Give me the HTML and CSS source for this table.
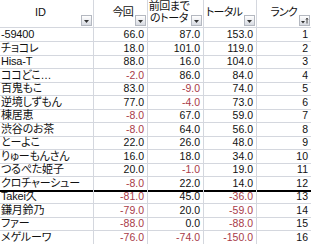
FILE: index.html
```html
<!DOCTYPE html>
<html lang="ja">
<head>
<meta charset="utf-8">
<link rel="stylesheet" href="styles.css">
</head>
<body>
<div class="sheet">
  <div class="row head">
    <div class="cell h-id"><span class="ht">ID</span><span class="dd"><svg width="11" height="11" viewBox="0 0 11 11"><path d="M3 5h5l-2.5 3z" fill="#333"/></svg></span></div>
    <div class="cell h-num"><span class="ht">今回</span><span class="dd"><svg width="11" height="11" viewBox="0 0 11 11"><path d="M3 5h5l-2.5 3z" fill="#333"/></svg></span></div>
    <div class="cell h-num"><span class="ht two">前回まで<br>のトータ</span><span class="dd"><svg width="11" height="11" viewBox="0 0 11 11"><path d="M3 5h5l-2.5 3z" fill="#333"/></svg></span></div>
    <div class="cell h-num"><span class="ht">トータル</span><span class="dd"><svg width="11" height="11" viewBox="0 0 11 11"><path d="M3 5h5l-2.5 3z" fill="#333"/></svg></span></div>
    <div class="cell h-num"><span class="ht">ランク</span><span class="dd"><svg width="11" height="11" viewBox="0 0 11 11"><path d="M2 6h4l-2 2.5z" fill="#333"/><path d="M8 3.2v5.3M7 4.6l1-1.4 1 1.4" stroke="#333" stroke-width="0.9" fill="none"/></svg></span></div>
  </div>
  <div class="row"><div class="cell id">-59400</div><div class="cell n">66.0</div><div class="cell n">87.0</div><div class="cell n">153.0</div><div class="cell n">1</div></div>
  <div class="row"><div class="cell id">チョコレ</div><div class="cell n">18.0</div><div class="cell n">101.0</div><div class="cell n">119.0</div><div class="cell n">2</div></div>
  <div class="row"><div class="cell id">Hisa-T</div><div class="cell n">88.0</div><div class="cell n">16.0</div><div class="cell n">104.0</div><div class="cell n">3</div></div>
  <div class="row"><div class="cell id">ココどこ…</div><div class="cell n neg">-2.0</div><div class="cell n">86.0</div><div class="cell n">84.0</div><div class="cell n">4</div></div>
  <div class="row"><div class="cell id">百鬼もこ</div><div class="cell n">83.0</div><div class="cell n neg">-9.0</div><div class="cell n">74.0</div><div class="cell n">5</div></div>
  <div class="row"><div class="cell id">逆境しずもん</div><div class="cell n">77.0</div><div class="cell n neg">-4.0</div><div class="cell n">73.0</div><div class="cell n">6</div></div>
  <div class="row"><div class="cell id">棟居恵</div><div class="cell n neg">-8.0</div><div class="cell n">67.0</div><div class="cell n">59.0</div><div class="cell n">7</div></div>
  <div class="row"><div class="cell id">渋谷のお茶</div><div class="cell n neg">-8.0</div><div class="cell n">64.0</div><div class="cell n">56.0</div><div class="cell n">8</div></div>
  <div class="row"><div class="cell id">とーよこ</div><div class="cell n">22.0</div><div class="cell n">26.0</div><div class="cell n">48.0</div><div class="cell n">9</div></div>
  <div class="row"><div class="cell id">りゅーもんさん</div><div class="cell n">16.0</div><div class="cell n">18.0</div><div class="cell n">34.0</div><div class="cell n">10</div></div>
  <div class="row"><div class="cell id">つるぺた姫子</div><div class="cell n">20.0</div><div class="cell n neg">-1.0</div><div class="cell n">19.0</div><div class="cell n">11</div></div>
  <div class="row cut"><div class="cell id">クロチャーシュー</div><div class="cell n neg">-8.0</div><div class="cell n">22.0</div><div class="cell n">14.0</div><div class="cell n">12</div></div>
  <div class="row"><div class="cell id">Takei久</div><div class="cell n neg">-81.0</div><div class="cell n">45.0</div><div class="cell n neg">-36.0</div><div class="cell n">13</div></div>
  <div class="row"><div class="cell id">鎌月鈴乃</div><div class="cell n neg">-79.0</div><div class="cell n">20.0</div><div class="cell n neg">-59.0</div><div class="cell n">14</div></div>
  <div class="row"><div class="cell id">ファー</div><div class="cell n neg">-88.0</div><div class="cell n">0.0</div><div class="cell n neg">-88.0</div><div class="cell n">15</div></div>
  <div class="row"><div class="cell id">メゲルーワ</div><div class="cell n neg">-76.0</div><div class="cell n neg">-74.0</div><div class="cell n neg">-150.0</div><div class="cell n">16</div></div>
</div>
</body>
</html>
```

FILE: styles.css
```css
html, body {
  margin: 0;
  padding: 0;
  background: #ffffff;
}
body {
  font-family: "Liberation Sans", "Noto Sans CJK JP", sans-serif;
  font-size: 11px;
  font-feature-settings: "palt" 1;
  color: #111;
  overflow: hidden;
}
.sheet {
  width: 311px;
}
.row {
  display: grid;
  grid-template-columns: 94px 54px 56px 53px 54px;
  height: 13.5px;
  box-sizing: border-box;
}
.row.head {
  height: 28px;
}
.cell {
  box-sizing: border-box;
  border-right: 1px solid #d4d7de;
  border-bottom: 1px solid #d4d7de;
  line-height: 13px;
  white-space: nowrap;
  overflow-x: clip;
  overflow-y: visible;
}
.cell:last-child {
  border-right: none;
}
.row.cut .cell {
  border-bottom: 2px solid #000;
}
.id {
  padding-left: 1px;
  letter-spacing: -0.2px;
}
.n {
  text-align: right;
  padding-right: 3px;
  font-size: 10.5px;
}
.neg {
  color: #a83a48;
}
.head .cell {
  display: flex;
  align-items: flex-end;
  justify-content: flex-end;
  padding: 0 1px 1px 0;
}
.head .ht {
  align-self: center;
  line-height: 12px;
  margin: 0 2px 2px 0;
  letter-spacing: -0.8px;
  flex-shrink: 0;
}
.head .h-id .ht {
  flex: 1;
  text-align: center;
  margin-right: 0;
  letter-spacing: 0;
}
.head .ht.two {
  flex: 1;
  align-self: flex-start;
  text-align: center;
  margin: 0 1px 0 0;
  letter-spacing: -0.4px;
}
.dd {
  width: 11px;
  height: 11px;
  box-sizing: border-box;
  border: 1px solid #b4b8c0;
  background: linear-gradient(#ffffff, #d8dbe2);
  display: flex;
  flex-shrink: 0;
}
.dd svg {
  display: block;
  margin: -1px;
}
```
